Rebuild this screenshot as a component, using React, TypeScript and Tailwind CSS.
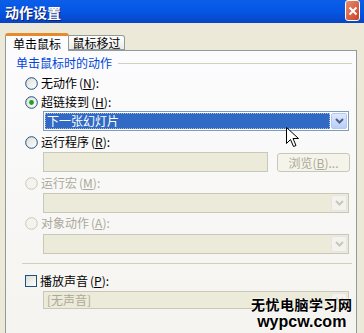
import React from "react";

const font = { fontFamily: '"Noto Sans CJK SC", "Liberation Sans", sans-serif' };

function Radio({ checked, disabled }: { checked?: boolean; disabled?: boolean }) {
  return (
    <svg width="13" height="13" viewBox="0 0 13 13" className="shrink-0">
      <defs>
        <linearGradient id="rg" x1="0" y1="0" x2="1" y2="1">
          <stop offset="0" stopColor="#dcdcd6" />
          <stop offset="1" stopColor="#ffffff" />
        </linearGradient>
      </defs>
      <circle
        cx="6.5"
        cy="6.5"
        r="5.8"
        fill={disabled ? "#f4f3ee" : "url(#rg)"}
        stroke={disabled ? "#cac8bb" : "#1c5180"}
        strokeWidth="1"
      />
      {checked && <circle cx="6.5" cy="6.5" r="2.4" fill="#21a121" />}
    </svg>
  );
}

function Arrow({ disabled }: { disabled?: boolean }) {
  return (
    <div
      className={
        disabled
          ? "w-[16px] h-full flex items-center justify-center border border-[#e6e5df] bg-[#f3f2ee] rounded-[2px]"
          : "w-[16px] h-full flex items-center justify-center border border-[#b3c8f5] bg-gradient-to-b from-[#dfe9ff] to-[#b8cdf8] rounded-[2px]"
      }
    >
      <svg width="9" height="6" viewBox="0 0 9 6">
        <path
          d="M1 1 L4.5 4.5 L8 1"
          fill="none"
          stroke={disabled ? "#c9c7ba" : "#4d6185"}
          strokeWidth="2"
        />
      </svg>
    </div>
  );
}

function Label({
  text,
  k,
  disabled,
}: {
  text: string;
  k: string;
  disabled?: boolean;
}) {
  return (
    <span className={disabled ? "text-[#aca899]" : "text-black"}>
      {text}
      <span className="ml-[2px]">
        (<span className="underline">{k}</span>):
      </span>
    </span>
  );
}

function DisabledSelect({ w, h = 20 }: { w: number; h?: number }) {
  return (
    <div
      className="flex items-stretch border border-[#c9c7ba] bg-[#ecead9] p-[1px]"
      style={{ width: w, height: h }}
    >
      <div className="flex-1" />
      <Arrow disabled />
    </div>
  );
}

export default function App() {
  return (
    <div
      className="w-[364px] h-[333px] overflow-hidden bg-[#ece9d8] relative text-[12px] leading-[14px]"
      style={font}
    >
      {/* title bar */}
      <div className="h-[23px] flex items-center justify-between pl-[5px] pr-[4px] bg-gradient-to-b from-[#0a5ee8] via-[#0556e4] to-[#0845c4]">
        <span className="text-white font-bold text-[14px] [text-shadow:1px_1px_0_#0a1e6e]">
          动作设置
        </span>
        <div className="w-[15px] h-[21px] -mt-[2px] rounded-[3px] border border-white bg-gradient-to-br from-[#e98a6c] to-[#c9401f] flex items-center justify-center">
          <svg width="10" height="10" viewBox="0 0 10 10">
            <path d="M1.5 1.5 L8.5 8.5 M8.5 1.5 L1.5 8.5" stroke="#fff" strokeWidth="2" />
          </svg>
        </div>
      </div>

      {/* tabs */}
      <div className="mt-[10px] pl-[5px] flex items-end h-[17px]">
        <div className="w-[64px] h-[18px] -mb-[1px] relative z-10 bg-[#fcfcfe] border border-b-0 border-[#919b9c] border-t-[3px] border-t-[#e68b2c] rounded-t-[3px] flex items-center justify-center">
          单击鼠标
        </div>
        <div className="w-[56px] h-[15px] border border-l-0 border-[#919b9c] rounded-tr-[3px] bg-gradient-to-b from-[#ffffff] to-[#ecebe6] flex items-center justify-center">
          鼠标移过
        </div>
      </div>

      {/* tab panel */}
      <div className="ml-[5px] w-[352px] h-[300px] border border-[#919b9c] bg-gradient-to-b from-[#fcfcfe] to-[#f4f3ee]">
        {/* group header */}
        <div className="mt-[5px] pl-[10px] pr-[4px] flex items-center h-[14px]">
          <span className="text-[#0046d5]">单击鼠标时的动作</span>
          <div className="flex-1 ml-[6px] h-px bg-[#d0d0bf]" />
        </div>

        <div className="pl-[19px]">
          <div className="mt-[5px] h-[16px] flex items-center gap-[3px]">
            <Radio />
            <Label text="无动作" k="N" />
          </div>
          <div className="mt-[3px] h-[16px] flex items-center gap-[3px]">
            <Radio checked />
            <Label text="超链接到" k="H" />
          </div>
        </div>

        <div className="pl-[37px]">
          <div className="mt-[1px] w-[306px] h-[20px] flex items-stretch border border-[#7f9db9] bg-white p-[1px]">
            <div className="flex-1 bg-[#316ac5] text-white flex items-center pl-[2px] outline outline-1 outline-dotted outline-[#a9b7d8] -outline-offset-1">
              下一张幻灯片
            </div>
            <div className="w-[1px]" />
            <Arrow />
          </div>
        </div>

        <div className="pl-[19px]">
          <div className="mt-[3px] h-[16px] flex items-center gap-[3px]">
            <Radio />
            <Label text="运行程序" k="R" />
          </div>
        </div>

        <div className="pl-[37px] mt-[2px] flex items-start">
          <div className="w-[225px] h-[20px] border border-[#c9c7ba] bg-[#ecead9]" />
          <div className="ml-[9px] mt-[1px] w-[73px] h-[19px] border border-[#c9c7ba] rounded-[3px] bg-[#f5f4ea] flex items-center justify-center text-[#aca899]">
            浏览(<span className="underline">B</span>)...
          </div>
        </div>

        <div className="pl-[19px]">
          <div className="mt-[3px] h-[16px] flex items-center gap-[3px]">
            <Radio disabled />
            <Label text="运行宏" k="M" disabled />
          </div>
        </div>
        <div className="pl-[37px] mt-[2px]">
          <DisabledSelect w={306} />
        </div>

        <div className="pl-[19px]">
          <div className="mt-[2px] h-[16px] flex items-center gap-[3px]">
            <Radio disabled />
            <Label text="对象动作" k="A" disabled />
          </div>
        </div>
        <div className="pl-[37px] mt-[3px]">
          <DisabledSelect w={306} />
        </div>

        {/* group bottom */}
        <div className="ml-[16px] mr-[4px] mt-[9px] h-px bg-[#d0d0bf]" />

        <div className="pl-[19px]">
          <div className="mt-[9px] h-[16px] flex items-center gap-[3px]">
            <div className="w-[12px] h-[12px] border border-[#1c5180] bg-gradient-to-br from-[#dcdcd6] to-white shrink-0" />
            <Label text="播放声音" k="P" />
          </div>
        </div>
        <div className="pl-[37px] mt-[2px]">
          <div className="w-[306px] h-[18px] flex items-stretch border border-[#c9c7ba] bg-[#ecead9] p-[1px]">
            <div className="flex-1 text-[#aca899] flex items-center pl-[2px]">[无声音]</div>
            <Arrow disabled />
          </div>
        </div>
      </div>

      {/* mouse cursor */}
      <svg
        className="absolute left-[286px] top-[127px]"
        width="13"
        height="21"
        viewBox="0 0 13 21"
      >
        <path
          d="M0.5 0.5 L0.5 16.5 L4.5 12.5 L7.5 19.5 L10 18.5 L7 11.5 L12.5 11.5 Z"
          fill="#fff"
          stroke="#000"
          strokeWidth="1"
        />
      </svg>

      {/* watermark */}
      <div className="absolute left-[251px] top-[296px] flex flex-col items-center gap-[2px] [text-shadow:0_0_2px_#fff,0_0_2px_#fff]">
        <span className="text-[14px] leading-[16px] font-bold text-black tracking-[0.5px]">无忧电脑学习网</span>
        <span
          className="text-[16px] leading-[16px] font-bold text-black"
          style={{ fontFamily: '"Liberation Sans", sans-serif' }}
        >
          wypcw.com
        </span>
      </div>
    </div>
  );
}
